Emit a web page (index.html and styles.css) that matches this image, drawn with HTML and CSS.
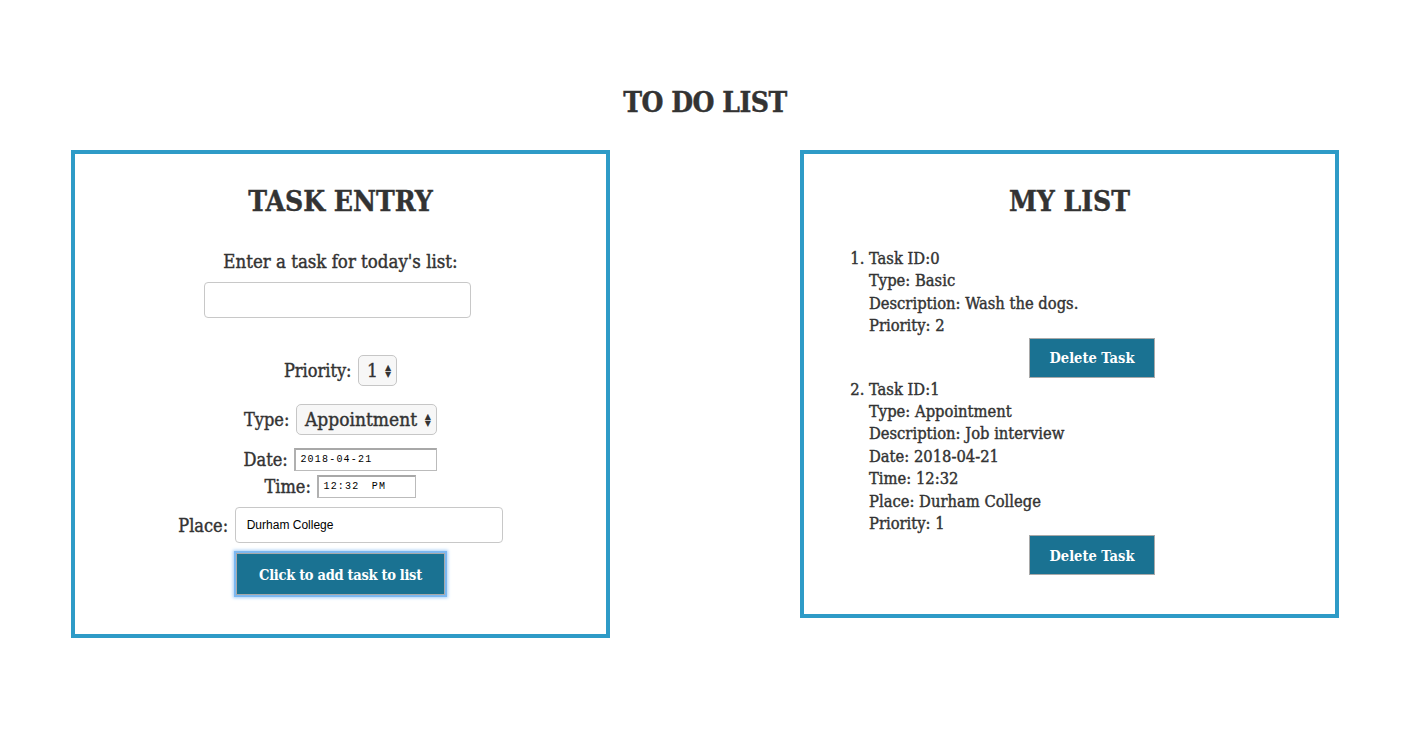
FILE: index.html
```html
<!DOCTYPE html>
<html>
<head>
<meta charset="utf-8">
<title>To Do List</title>
<link rel="stylesheet" href="styles.css">
</head>
<body>
<h1 class="page-title">TO DO LIST</h1>
<div class="boards">
  <section class="panel panel-entry">
    <h2 class="panel-title">TASK ENTRY</h2>
    <form class="entry-form">
      <div class="row row-task">
        <label class="lbl lbl-task">Enter a task for today's list:</label>
        <input class="text-input" type="text">
      </div>
      <div class="row row-priority">
        <label class="lbl">Priority:</label>
        <span class="select select-small">1<span class="arrows">&#9650;<br>&#9660;</span></span>
      </div>
      <div class="row row-type">
        <label class="lbl">Type:</label>
        <span class="select select-type">Appointment<span class="arrows">&#9650;<br>&#9660;</span></span>
      </div>
      <div class="row row-date">
        <label class="lbl">Date:</label>
        <span class="mono-input date-input">2018-04-21</span>
      </div>
      <div class="row row-time">
        <label class="lbl">Time:</label>
        <span class="mono-input time-input">12:32 PM</span>
      </div>
      <div class="row row-place">
        <label class="lbl">Place:</label>
        <span class="text-input place-input">Durham College</span>
      </div>
      <div class="row row-submit">
        <button class="btn btn-submit" type="button">Click to add task to list</button>
      </div>
    </form>
  </section>
  <section class="panel panel-list">
    <h2 class="panel-title">MY LIST</h2>
    <ol class="task-list">
      <li class="task">
        <div>Task ID:0</div>
        <div>Type: Basic</div>
        <div>Description: Wash the dogs.</div>
        <div>Priority: 2</div>
        <div class="task-actions"><button class="btn btn-delete" type="button">Delete Task</button></div>
      </li>
      <li class="task">
        <div>Task ID:1</div>
        <div>Type: Appointment</div>
        <div>Description: Job interview</div>
        <div>Date: 2018-04-21</div>
        <div>Time: 12:32</div>
        <div>Place: Durham College</div>
        <div>Priority: 1</div>
        <div class="task-actions"><button class="btn btn-delete" type="button">Delete Task</button></div>
      </li>
    </ol>
  </section>
</div>
</body>
</html>
```
FILE: styles.css
```css
html, body {
  margin: 0;
  padding: 0;
  background: #fff;
}
body {
  font-family: "DejaVu Serif", serif;
  font-stretch: condensed;
  color: #333;
  -webkit-text-stroke: 0.4px #333;
}
.page-title {
  margin: 0;
  padding-top: 84px;
  height: 150px;
  box-sizing: border-box;
  font-size: 28px;
  line-height: 38px;
  text-align: center;
  font-weight: bold;
  letter-spacing: -0.5px;
}
.boards {
  display: flex;
  justify-content: space-between;
  align-items: flex-start;
  padding: 0 71px;
}
.panel {
  width: 539px;
  box-sizing: border-box;
  border: 4px solid #2e9bc7;
  background: #fff;
}
.panel-entry { height: 488px; }
.panel-list { height: 468px; }
.panel-title {
  margin: 28px 0 0;
  font-size: 28px;
  line-height: 40px;
  text-align: center;
  font-weight: bold;
}
.entry-form {
  margin-top: 29px;
  text-align: center;
}
.row {
  text-align: center;
  white-space: nowrap;
}
.lbl {
  font-size: 18px;
  vertical-align: middle;
}
.lbl-task {
  display: block;
  font-size: 18.5px;
  line-height: 22px;
  margin-bottom: 9px;
}
.text-input {
  display: inline-block;
  box-sizing: border-box;
  width: 267px;
  height: 36px;
  border: 1px solid #c8c8c8;
  border-radius: 4px;
  background: #fff;
  vertical-align: middle;
  font-family: "Liberation Sans", Arial, sans-serif;
  font-stretch: normal;
  font-size: 12px;
  text-align: left;
  padding: 0 11px;
  line-height: 34px;
  color: #000;
  -webkit-text-stroke: 0;
}
.row-task .text-input { margin-left: -6px; }
.row-priority { margin-top: 37px; }
.row-type { margin-top: 18px; }
.row-date { margin-top: 13px; }
.row-time { margin-top: 4px; }
.row-place { margin-top: 9px; }
.row-submit { margin-top: 10px; }
.select {
  display: inline-block;
  box-sizing: border-box;
  height: 31px;
  border: 1px solid #c6c6c6;
  border-radius: 5px;
  background: #f7f7f7;
  font-size: 19px;
  line-height: 29px;
  padding: 0 18px 0 8px;
  position: relative;
  vertical-align: middle;
  margin-left: 2px;
  text-align: left;
}
.select-small { width: 39px; }
.select-type { width: 141px; }
.arrows {
  position: absolute;
  right: 5px;
  top: 8px;
  font-family: "DejaVu Sans", sans-serif;
  font-stretch: normal;
  font-size: 8px;
  line-height: 7px;
  color: #333;
  -webkit-text-stroke: 0;
}
.mono-input {
  display: inline-block;
  box-sizing: border-box;
  height: 23px;
  border: 1px solid #bbb;
  border-top: 2px solid #a8a8a8;
  border-left: 2px solid #b0b0b0;
  background: #fff;
  vertical-align: middle;
  font-family: "Liberation Mono", monospace;
  font-stretch: normal;
  font-size: 10px;
  line-height: 19px;
  text-align: left;
  padding-left: 4px;
  color: #000;
  letter-spacing: 1.2px;
  margin-left: 2px;
  -webkit-text-stroke: 0;
}
.date-input { width: 143px; }
.time-input { width: 99px; word-spacing: 5px; }
.place-input {
  width: 268px;
  margin-left: 2px;
}
.btn {
  font-family: "DejaVu Serif", serif;
  font-stretch: condensed;
  font-weight: bold;
  color: #fff;
  background: #1a7292;
  border: 1px solid #a9a9a9;
  cursor: pointer;
  -webkit-text-stroke: 0;
}
.btn-submit {
  width: 209px;
  height: 42px;
  font-size: 14.5px;
  box-shadow: 0 0 0 2px #7db8f0, 0 0 3px 3px #a8d0f8;
  letter-spacing: -0.3px;
}
.task-list {
  margin: 26px 0 0;
  padding: 0 25px 0 65px;
  font-size: 16.4px;
  line-height: 22.4px;
}
.task-actions {
  line-height: 0;
  margin: 0 0 1px;
}
.btn-delete {
  width: 126px;
  height: 40px;
  font-size: 14.5px;
  margin-left: 160px;
}
```
